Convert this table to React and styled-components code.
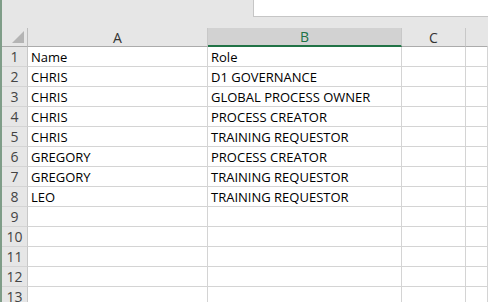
import React from 'react';
import styled, { createGlobalStyle } from 'styled-components';

const GlobalStyle = createGlobalStyle`
    html, body {
        margin: 0;
        padding: 0;
        background: #ffffff;
        overflow: hidden;
    }
`;

const Window = styled.div`
    width: 488px;
    height: 302px;
    overflow: hidden;
    display: flex;
    flex-direction: column;
    background: #e6e6e6;
    border-left: 2px solid #7f9d88;
    box-sizing: border-box;
    font-family: "Open Sans", "Liberation Sans", sans-serif;
`;

const FormulaArea = styled.div`
    height: 28px;
    flex: none;
    display: flex;
    align-items: flex-start;
    padding-left: 251px;
    box-sizing: border-box;
`;

const FormulaInput = styled.div`
    flex: 1;
    height: 17px;
    background: #ffffff;
    border-left: 1px solid #c6c6c6;
    border-bottom: 1px solid #c6c6c6;
    box-sizing: border-box;
`;

const Sheet = styled.div`
    display: grid;
    grid-template-columns: 26px 180px 194px 64px 1fr;
    grid-auto-rows: 20px;
    grid-template-rows: 19px;
    background: #ffffff;
`;

const Corner = styled.div`
    background: #e6e6e6;
    border-right: 1px solid #bdbdbd;
    border-bottom: 1px solid #ababab;
    box-sizing: border-box;
    position: relative;

    &::after {
        content: "";
        position: absolute;
        right: 3px;
        bottom: 3px;
        border-style: solid;
        border-width: 0 0 12px 12px;
        border-color: transparent transparent #b4b4b4 transparent;
    }
`;

const ColHead = styled.div`
    display: flex;
    align-items: center;
    justify-content: center;
    font-size: 14px;
    box-sizing: border-box;
    border-right: 1px solid ${p => (p.$last ? 'transparent' : '#c8c8c8')};
    background: ${p => (p.$active ? '#d2d2d2' : '#e6e6e6')};
    color: ${p => (p.$active ? '#217346' : '#333333')};
    border-bottom: ${p => (p.$active ? '2px solid #217346' : '1px solid #ababab')};
`;

const RowHead = styled.div`
    display: flex;
    align-items: center;
    justify-content: center;
    background: #e6e6e6;
    color: #444444;
    font-size: 14px;
    border-right: 1px solid #c8c8c8;
    border-bottom: 1px solid #d4d4d4;
    box-sizing: border-box;
`;

const Cell = styled.div`
    display: flex;
    align-items: center;
    padding-left: 3px;
    font-size: 13px;
    color: #000000;
    white-space: nowrap;
    overflow: hidden;
    border-right: 1px solid #d4d4d4;
    border-bottom: 1px solid #d4d4d4;
    box-sizing: border-box;
`;

const columns = ['A', 'B', 'C', ''];

const rows = [
    ['Name', 'Role'],
    ['CHRIS', 'D1 GOVERNANCE'],
    ['CHRIS', 'GLOBAL PROCESS OWNER'],
    ['CHRIS', 'PROCESS CREATOR'],
    ['CHRIS', 'TRAINING REQUESTOR'],
    ['GREGORY', 'PROCESS CREATOR'],
    ['GREGORY', 'TRAINING REQUESTOR'],
    ['LEO', 'TRAINING REQUESTOR'],
    [], [], [], [], [],
];

export default function App() {
    return (
        <>
            <GlobalStyle />
            <Window>
                <FormulaArea>
                    <FormulaInput />
                </FormulaArea>
                <Sheet>
                    <Corner />
                    {columns.map((c, i) => (
                        <ColHead key={i} $active={c === 'B'} $last={i === columns.length - 1}>{c}</ColHead>
                    ))}
                    {rows.map((r, i) => (
                        <React.Fragment key={i}>
                            <RowHead>{i + 1}</RowHead>
                            <Cell>{r[0]}</Cell>
                            <Cell>{r[1]}</Cell>
                            <Cell />
                            <Cell />
                        </React.Fragment>
                    ))}
                </Sheet>
            </Window>
        </>
    );
}
